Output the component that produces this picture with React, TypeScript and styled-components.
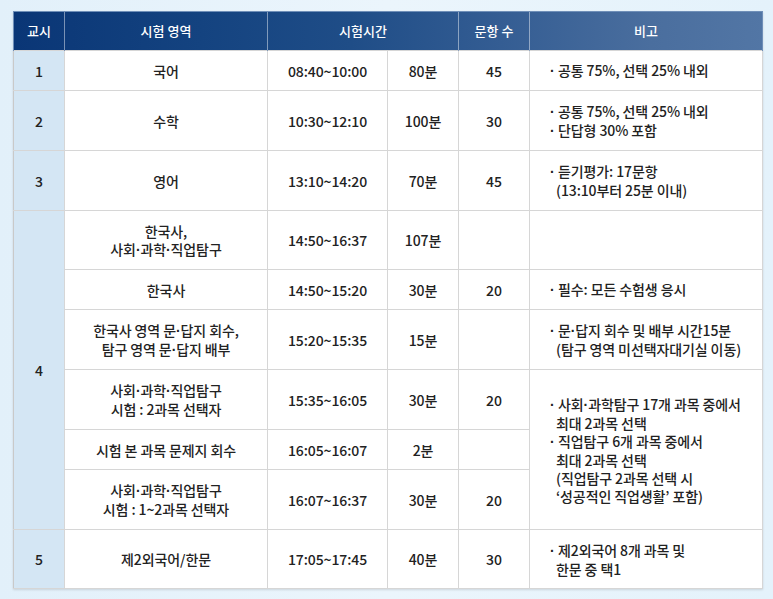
import styled, { createGlobalStyle } from "styled-components"

const GlobalStyle = createGlobalStyle`
    html, body {
        margin: 0;
        padding: 0;
    }
    body {
        background: linear-gradient(90deg, #e2f0fa 0%, #ebf5fc 50%, #e4f2fb 100%);
        font-family: "Noto Sans CJK KR", "Noto Sans", sans-serif;
        color: #222;
    }
`

type Row = {
    period?: { label: string; span: number }
    subject: string[]
    time: string
    minutes: string
    count: string
    note?: { lines: string[][]; span: number }
    height: number
}

const rows: Row[] = [
    {
        period: { label: "1", span: 1 },
        subject: ["국어"],
        time: "08:40~10:00",
        minutes: "80분",
        count: "45",
        note: { lines: [["공통 75%, 선택 25% 내외"]], span: 1 },
        height: 40,
    },
    {
        period: { label: "2", span: 1 },
        subject: ["수학"],
        time: "10:30~12:10",
        minutes: "100분",
        count: "30",
        note: { lines: [["공통 75%, 선택 25% 내외"], ["단답형 30% 포함"]], span: 1 },
        height: 60,
    },
    {
        period: { label: "3", span: 1 },
        subject: ["영어"],
        time: "13:10~14:20",
        minutes: "70분",
        count: "45",
        note: { lines: [["듣기평가: 17문항", "(13:10부터 25분 이내)"]], span: 1 },
        height: 60,
    },
    {
        period: { label: "4", span: 6 },
        subject: ["한국사,", "사회·과학·직업탐구"],
        time: "14:50~16:37",
        minutes: "107분",
        count: "",
        note: { lines: [], span: 1 },
        height: 59,
    },
    {
        subject: ["한국사"],
        time: "14:50~15:20",
        minutes: "30분",
        count: "20",
        note: { lines: [["필수: 모든 수험생 응시"]], span: 1 },
        height: 40,
    },
    {
        subject: ["한국사 영역 문·답지 회수,", "탐구 영역 문·답지 배부"],
        time: "15:20~15:35",
        minutes: "15분",
        count: "",
        note: { lines: [["문·답지 회수 및 배부 시간15분", "(탐구 영역 미선택자대기실 이동)"]], span: 1 },
        height: 60,
    },
    {
        subject: ["사회·과학·직업탐구", "시험 : 2과목 선택자"],
        time: "15:35~16:05",
        minutes: "30분",
        count: "20",
        note: {
            lines: [
                ["사회·과학탐구 17개 과목 중에서", "최대 2과목 선택"],
                ["직업탐구 6개 과목 중에서", "최대 2과목 선택", "(직업탐구 2과목 선택 시", "‘성공적인 직업생활’ 포함)"],
            ],
            span: 3,
        },
        height: 60,
    },
    {
        subject: ["시험 본 과목 문제지 회수"],
        time: "16:05~16:07",
        minutes: "2분",
        count: "",
        height: 40,
    },
    {
        subject: ["사회·과학·직업탐구", "시험 : 1~2과목 선택자"],
        time: "16:07~16:37",
        minutes: "30분",
        count: "20",
        height: 60,
    },
    {
        period: { label: "5", span: 1 },
        subject: ["제2외국어/한문"],
        time: "17:05~17:45",
        minutes: "40분",
        count: "30",
        note: { lines: [["제2외국어 8개 과목 및", "한문 중 택1"]], span: 1 },
        height: 59,
    },
]

// the CJK middle dot is full width; set it in a Latin face so it sits tight
const withDots = (text: string) =>
    text.split("·").flatMap((part, i) => (i === 0 ? [part] : [<Dot key={i}>·</Dot>, part]))

const App = () => {
    return (
        <>
            <GlobalStyle />
            <Page>
                <Table>
                    <colgroup>
                        <col style={{ width: 51 }} />
                        <col style={{ width: 203 }} />
                        <col style={{ width: 120 }} />
                        <col style={{ width: 71 }} />
                        <col style={{ width: 71 }} />
                        <col style={{ width: 233 }} />
                    </colgroup>
                    <thead>
                        <HeadRow>
                            <Th>교시</Th>
                            <Th>시험 영역</Th>
                            <Th colSpan={2}>시험시간</Th>
                            <Th>문항 수</Th>
                            <Th>비고</Th>
                        </HeadRow>
                    </thead>
                    <tbody>
                        {rows.map((row, i) => (
                            <tr key={i} style={{ height: row.height }}>
                                {row.period && (
                                    <PeriodCell rowSpan={row.period.span}>{row.period.label}</PeriodCell>
                                )}
                                <Td>
                                    {row.subject.map((line, j) => (
                                        <Line key={j}>{withDots(line)}</Line>
                                    ))}
                                </Td>
                                <Td>{row.time}</Td>
                                <Td>{row.minutes}</Td>
                                <Td>{row.count}</Td>
                                {row.note && (
                                    <NoteCell rowSpan={row.note.span}>
                                        {row.note.lines.map((item, j) => (
                                            <div key={j}>
                                                {item.map((line, k) => (
                                                    <Line key={k} $indent={k > 0}>
                                                        {k === 0 && <Bullet>·</Bullet>}
                                                        {withDots(line)}
                                                    </Line>
                                                ))}
                                            </div>
                                        ))}
                                    </NoteCell>
                                )}
                            </tr>
                        ))}
                    </tbody>
                </Table>
            </Page>
        </>
    )
}

const Page = styled.div`
    width: 773px;
    height: 599px;
    padding: 11px 0 0 13px;
    box-sizing: border-box;
`

const Table = styled.table`
    width: 749px;
    border-collapse: collapse;
    table-layout: fixed;
    background: #fff;
    font-size: 14px;
    font-weight: 500;
    line-height: 18px;
    letter-spacing: -0.1px;
    box-shadow: 0 1px 2px rgb(0 0 0 / 12%);
`

const HeadRow = styled.tr`
    height: 39px;
    background: linear-gradient(90deg, #0a3676 0%, #144380 25%, #1f4d87 45%, #345d93 65%, #4a6e9e 85%, #5276a5 100%);
`

const Th = styled.th`
    color: #fff;
    font-weight: 500;
    font-size: 13px;
    letter-spacing: 0;
    padding: 0;
    border-left: 1px solid rgb(255 255 255 / 45%);
    border-top: 1px solid #6f8fb8;

    &:first-child {
        border-left: 1px solid #6f8fb8;
    }
    &:last-child {
        border-right: 1px solid #6f8fb8;
    }
`

const Td = styled.td`
    text-align: center;
    vertical-align: middle;
    padding: 0 4px;
    border: 1px solid #d6d6d6;
`

const PeriodCell = styled(Td)`
    background: #d4e6f4;
    border-left-color: #c9c9c9;
`

const NoteCell = styled(Td)`
    text-align: left;
    padding: 0 4px 0 20px;
`

const Dot = styled.span`
    font-family: "Liberation Sans", sans-serif;
    font-weight: 700;
`

const Bullet = styled(Dot)`
    display: inline-block;
    width: 8px;
`

const Line = styled.span<{ $indent?: boolean }>`
    display: block;
    padding-left: ${(p) => (p.$indent ? "6px" : "0")};
    white-space: nowrap;
`

export default App
